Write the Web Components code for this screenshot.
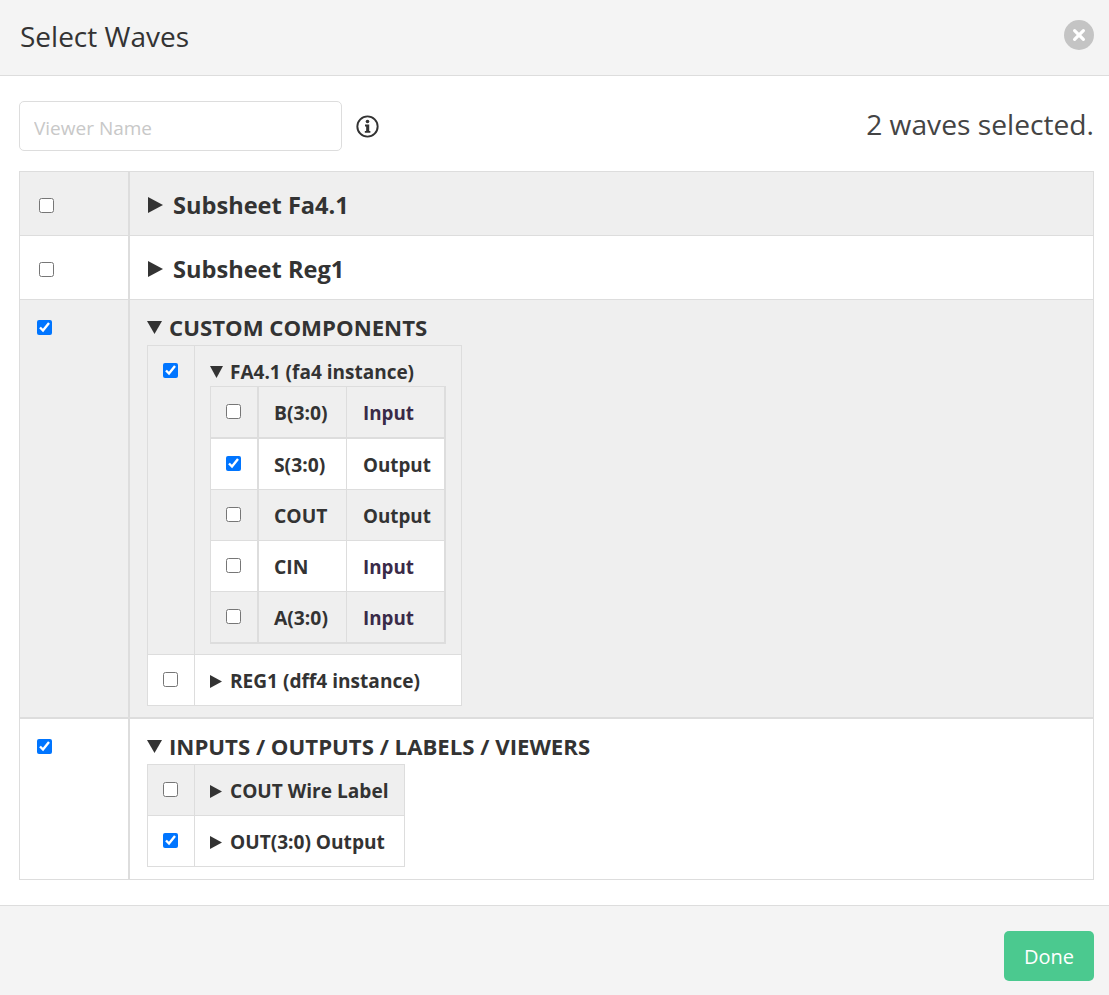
<!DOCTYPE html>
<html>
<head>
<meta charset="utf-8">
<title>Select Waves</title>
<style>
  html, body { margin: 0; padding: 0; background: #fff; }
  body { font-family: "Open Sans", "Noto Sans", "Liberation Sans", sans-serif; color: #333; }
</style>
</head>
<body>

<wave-modal heading="Select Waves" count="2 waves selected.">

  <wave-row size="xl" shaded>
    <wave-tree label="Subsheet Fa4.1"></wave-tree>
  </wave-row>
  <wave-row size="xl">
    <wave-tree label="Subsheet Reg1"></wave-tree>
  </wave-row>

  <wave-row size="xl" shaded checked open thick>
    <wave-tree label="CUSTOM COMPONENTS" open>
      <wave-table>
        <wave-row size="md" shaded checked open>
          <wave-tree level="2" label="FA4.1 (fa4 instance)" open>
            <pin-table>
              <pin-row name="B(3:0)" kind="Input" shaded></pin-row>
              <pin-row name="S(3:0)" kind="Output" checked></pin-row>
              <pin-row name="COUT" kind="Output" shaded></pin-row>
              <pin-row name="CIN" kind="Input"></pin-row>
              <pin-row name="A(3:0)" kind="Input" shaded></pin-row>
            </pin-table>
          </wave-tree>
        </wave-row>
        <wave-row size="md">
          <wave-tree level="2" label="REG1 (dff4 instance)"></wave-tree>
        </wave-row>
      </wave-table>
    </wave-tree>
  </wave-row>

  <wave-row size="xl" checked open style="--tail: 12px">
    <wave-tree label="INPUTS / OUTPUTS / LABELS / VIEWERS" open>
      <wave-table>
        <wave-row size="md" shaded>
          <wave-tree level="2" label="COUT Wire Label"></wave-tree>
        </wave-row>
        <wave-row size="md" checked>
          <wave-tree level="2" label="OUT(3:0) Output"></wave-tree>
        </wave-row>
      </wave-table>
    </wave-tree>
  </wave-row>

</wave-modal>

<script>
class WaveModal extends HTMLElement {
  connectedCallback() {
    const root = this.attachShadow({ mode: "open" });
    root.innerHTML = `
      <style>
        :host { display: flex; flex-direction: column; width: 1109px; height: 995px; box-sizing: border-box; background: #fff; }
        header {
          height: 75px; flex: none; background: #f4f4f4; border-bottom: 1px solid #ddd;
          display: flex; align-items: center; justify-content: space-between;
          padding: 0 15px 0 20px;
        }
        h1 { margin: 0; font-size: 28px; font-weight: 400; color: #333; line-height: 73px; margin-bottom: 2px; }
        .close { width: 30px; height: 30px; border-radius: 50%; background: #c4c4c4; display: flex; align-items: center; justify-content: center; margin-top: -5px; }
        main { flex: 1; padding: 25px 15px 0 19px; }
        .top { display: flex; align-items: center; height: 50px; margin-bottom: 20px; }
        .name {
          width: 323px; height: 50px; box-sizing: border-box; border: 1px solid #ddd; border-radius: 5px;
          padding: 3px 14px 0; font: inherit; font-size: 19px; color: #333; outline: none; background: #fff;
        }
        .name::placeholder { color: #c8c8c8; opacity: 1; }
        .info { margin-left: 14px; display: block; }
        .count { margin-left: auto; font-size: 28.2px; color: #444; margin-top: -4px; }
        .table { border: 1px solid #ddd; }
        footer {
          height: 90px; box-sizing: border-box; flex: none; background: #f4f4f4; border-top: 1px solid #ddd;
          display: flex; justify-content: flex-end; align-items: flex-start; padding: 25px 15px 0 0;
        }
        button {
          width: 90px; height: 50px; border: 0; border-radius: 5px; background: #4bc98f; color: #fff;
          font: inherit; font-size: 20px; padding: 0;
        }
      </style>
      <header>
        <h1>${this.getAttribute("heading")}</h1>
        <div class="close">
          <svg width="14" height="14" viewBox="0 0 14 14"><path d="M2.6 2.6 L11.4 11.4 M11.4 2.6 L2.6 11.4" stroke="#fff" stroke-width="3.2" stroke-linecap="round"/></svg>
        </div>
      </header>
      <main>
        <div class="top">
          <input class="name" placeholder="Viewer Name">
          <svg class="info" width="23" height="23" viewBox="0 0 24 24">
            <circle cx="12" cy="12" r="10.6" fill="none" stroke="#333" stroke-width="2"/>
            <circle cx="12" cy="6.8" r="1.9" fill="#333"/>
            <path d="M9.4 10 H13.8 V16.6 H15 V18.6 H9.2 V16.6 H10.6 V12 H9.4 Z" fill="#333"/>
          </svg>
          <div class="count">${this.getAttribute("count")}</div>
        </div>
        <div class="table"><slot></slot></div>
      </main>
      <footer><button>Done</button></footer>
    `;
  }
}

// one row of a table: checkbox column + content column
class WaveRow extends HTMLElement {
  connectedCallback() {
    const root = this.attachShadow({ mode: "open" });
    const xl = this.getAttribute("size") == "xl";
    const open = this.hasAttribute("open");
    root.innerHTML = `
      <style>
        :host { display: grid; grid-template-columns: ${xl ? "110px" : "47px"} 1fr; background: #fff; border-bottom: 1px solid #ddd; }
        :host([shaded]) { background: #efefef; }
        :host([thick]) { border-bottom-width: 2px; }
        :host(:last-child) { border-bottom: 0; }
        .check { border-right: ${xl ? 2 : 1}px solid #ddd; display: flex; align-items: flex-start; }
        input { width: 15px; height: 15px; margin: 0; }
      </style>
      <div class="check"><input type="checkbox" ${this.hasAttribute("checked") ? "checked" : ""}></div>
      <div class="content"><slot></slot></div>
    `;
    const box = root.querySelector("input");
    if (xl) {
      box.style.marginLeft = open ? "17px" : "19px";
      box.style.marginTop = open ? "20px" : "26px";
    } else {
      box.style.marginLeft = "15px";
      box.style.marginTop = "17px";
    }
  }
}

// expandable label with triangle, children go in the slot
class WaveTree extends HTMLElement {
  connectedCallback() {
    const root = this.attachShadow({ mode: "open" });
    const open = this.hasAttribute("open");
    const level2 = this.getAttribute("level") == "2";
    const tri = open
      ? `<svg width="15" height="13" viewBox="0 0 15 13"><polygon points="0,0 15,0 7.5,13" fill="#333"/></svg>`
      : `<svg width="15" height="16" viewBox="0 0 15 16"><polygon points="0,0 15,8 0,16" fill="#333"/></svg>`;
    const tri2 = open
      ? `<svg width="13" height="12" viewBox="0 0 13 12"><polygon points="0,0 13,0 6.5,12" fill="#333"/></svg>`
      : `<svg width="12" height="13" viewBox="0 0 12 13"><polygon points="0,0 12,6.5 0,13" fill="#333"/></svg>`;
    root.innerHTML = `
      <style>
        :host { display: block; font-weight: 700; color: #333; }
        .label { display: flex; align-items: center; box-sizing: border-box; }
        :host(:not([level])) .label { font-size: 23.6px; height: 63px; padding: 3px 0 0 18px; }
        :host(:not([level])) svg { margin-right: 10px; }
        :host(:not([level])[open]) { padding: 10px 0 var(--tail, 11px) 0; }
        :host(:not([level])[open]) .label { font-size: 22.2px; height: 35px; padding: 0 0 0 17px; }
        :host(:not([level])[open]) svg { margin-right: 7px; }
        :host([level]) .label { font-size: 19.1px; height: 50px; padding: 2px 15px 0 15px; }
        :host([level]) svg { margin-right: 8px; }
        :host([level][open]) { padding-bottom: 10px; }
        :host([level][open]) .label { height: 40px; padding-top: 12px; font-size: 19px; }
        :host([level][open]) svg { margin-right: 7px; }
        .kids { padding-left: 17px; }
        :host([level]) .kids { padding: 0 15px; }
      </style>
      <div class="label">${level2 ? tri2 : tri}<span>${this.getAttribute("label")}</span></div>
      <div class="kids"><slot></slot></div>
    `;
  }
}

class WaveTable extends HTMLElement {
  connectedCallback() {
    const root = this.attachShadow({ mode: "open" });
    root.innerHTML = `
      <style>
        :host { display: table; border: 1px solid #ddd; }
      </style>
      <slot></slot>
    `;
  }
}

class PinTable extends HTMLElement {
  connectedCallback() {
    const root = this.attachShadow({ mode: "open" });
    root.innerHTML = `
      <style>
        :host { display: block; width: 236px; box-sizing: border-box; border: 1px solid #ddd; border-right-width: 2px; border-bottom-width: 2px; }
      </style>
      <slot></slot>
    `;
  }
}

class PinRow extends HTMLElement {
  connectedCallback() {
    const root = this.attachShadow({ mode: "open" });
    const input = this.getAttribute("kind") == "Input";
    root.innerHTML = `
      <style>
        :host { display: grid; grid-template-columns: 48px 88px 1fr; height: 51px; box-sizing: border-box; background: #fff; border-bottom: 1px solid #ddd; font-size: 18.8px; font-weight: 700; color: #333; }
        :host([shaded]) { background: #efefef; }
        :host(:first-child) { height: 52px; border-bottom-width: 2px; }
        :host(:last-child) { border-bottom: 0; height: 50px; }
        div { display: flex; align-items: center; padding-left: 15px; padding-top: 2px; }
        .c { border-right: 2px solid #ddd; align-items: flex-start; padding-top: 0; }
        .n { border-right: 1px solid #ddd; font-size: 19.3px; padding-top: 0; }
        .k { padding-left: 16px; ${input ? "color: #3a2a48;" : ""} }
        input { width: 15px; height: 15px; margin: 17px 0 0 0; }
      </style>
      <div class="c"><input type="checkbox" ${this.hasAttribute("checked") ? "checked" : ""}></div>
      <div class="n">${this.getAttribute("name")}</div>
      <div class="k">${this.getAttribute("kind")}</div>
    `;
  }
}

customElements.define("wave-modal", WaveModal);
customElements.define("wave-row", WaveRow);
customElements.define("wave-tree", WaveTree);
customElements.define("wave-table", WaveTable);
customElements.define("pin-table", PinTable);
customElements.define("pin-row", PinRow);
</script>
</body>
</html>
